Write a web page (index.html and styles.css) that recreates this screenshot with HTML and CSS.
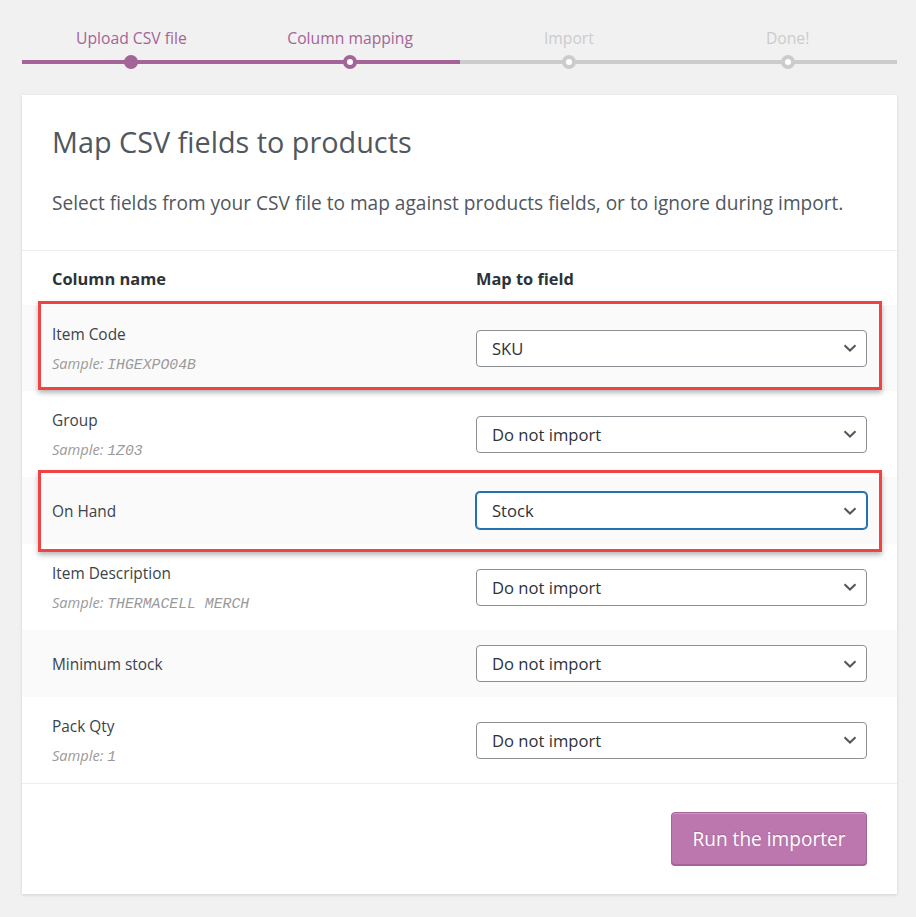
FILE: index.html
```html
<!DOCTYPE html>
<html>
<head>
<meta charset="utf-8">
<link rel="stylesheet" href="styles.css">
</head>
<body>
<div class="page">
  <ol class="steps">
    <li class="step done"><span class="step-label">Upload CSV file</span><span class="dot"></span></li>
    <li class="step active"><span class="step-label">Column mapping</span><span class="dot"></span></li>
    <li class="step"><span class="step-label">Import</span><span class="dot"></span></li>
    <li class="step"><span class="step-label">Done!</span><span class="dot"></span></li>
  </ol>

  <div class="card">
    <header class="card-header">
      <h2 class="title">Map CSV fields to products</h2>
      <p class="intro">Select fields from your CSV file to map against products fields, or to ignore during import.</p>
    </header>

    <div class="table">
      <div class="row head">
        <div class="cell name">Column name</div>
        <div class="cell field">Map to field</div>
      </div>

      <div class="row shaded">
        <div class="cell name">
          <div class="label">Item Code</div>
          <div class="sample">Sample: <code>IHGEXPO04B</code></div>
        </div>
        <div class="cell field"><div class="select"><span>SKU</span><svg class="chev" viewBox="0 0 14 8"><path d="M1.5 1.2l5.5 5.3 5.5-5.3" /></svg></div></div>
        <div class="highlight one"></div>
      </div>

      <div class="row">
        <div class="cell name">
          <div class="label">Group</div>
          <div class="sample">Sample: <code>1Z03</code></div>
        </div>
        <div class="cell field"><div class="select"><span>Do not import</span><svg class="chev" viewBox="0 0 14 8"><path d="M1.5 1.2l5.5 5.3 5.5-5.3" /></svg></div></div>
      </div>

      <div class="row shaded">
        <div class="cell name">
          <div class="label">On Hand</div>
        </div>
        <div class="cell field"><div class="select focus"><span>Stock</span><svg class="chev" viewBox="0 0 14 8"><path d="M1.5 1.2l5.5 5.3 5.5-5.3" /></svg></div></div>
        <div class="highlight two"></div>
      </div>

      <div class="row">
        <div class="cell name">
          <div class="label">Item Description</div>
          <div class="sample">Sample: <code>THERMACELL MERCH</code></div>
        </div>
        <div class="cell field"><div class="select"><span>Do not import</span><svg class="chev" viewBox="0 0 14 8"><path d="M1.5 1.2l5.5 5.3 5.5-5.3" /></svg></div></div>
      </div>

      <div class="row shaded">
        <div class="cell name">
          <div class="label">Minimum stock</div>
        </div>
        <div class="cell field"><div class="select"><span>Do not import</span><svg class="chev" viewBox="0 0 14 8"><path d="M1.5 1.2l5.5 5.3 5.5-5.3" /></svg></div></div>
      </div>

      <div class="row last">
        <div class="cell name">
          <div class="label">Pack Qty</div>
          <div class="sample">Sample: <code>1</code></div>
        </div>
        <div class="cell field"><div class="select"><span>Do not import</span><svg class="chev" viewBox="0 0 14 8"><path d="M1.5 1.2l5.5 5.3 5.5-5.3" /></svg></div></div>
      </div>
    </div>

    <div class="actions">
      <button class="run">Run the importer</button>
    </div>
  </div>
</div>
</body>
</html>
```
FILE: styles.css
```css
* { box-sizing: border-box; }
html, body { margin: 0; padding: 0; }
body {
  background: #f1f1f1;
  font-family: "Open Sans", "Noto Sans", sans-serif;
  color: #50575e;
  width: 916px;
  height: 917px;
  overflow: hidden;
}
.page {
  padding: 0 19px 0 22px;
}
.steps {
  list-style: none;
  margin: 0;
  padding: 26px 0 0;
  display: grid;
  grid-template-columns: repeat(4, 1fr);
  height: 95px;
}
.step {
  position: relative;
  display: flex;
  flex-direction: column;
  align-items: center;
  border-bottom: 4px solid #ccc;
  height: 38px;
  color: #ccc;
  font-size: 15.7px;
  line-height: 24px;
}
.step.done, .step.active {
  border-bottom-color: #a46497;
  color: #a46497;
}
.step-label { display: block; white-space: nowrap; }
.dot {
  position: absolute;
  left: 50%;
  bottom: -9px;
  width: 14px;
  height: 14px;
  margin-left: -7px;
  border-radius: 50%;
  background: #fff;
  border: 4px solid #ccc;
}
.done .dot { background: #a46497; border-color: #a46497; }
.active .dot { border-color: #a46497; }

.card {
  background: #fff;
  box-shadow: 0 1px 3px rgba(0,0,0,0.13);
  width: 875px;
}
.card-header {
  padding: 25px 30px 0;
  border-bottom: 1px solid #eee;
  height: 156px;
}
.title {
  margin: 0;
  font-size: 28.8px;
  font-weight: 400;
  line-height: 44px;
  color: #50575e;
  white-space: nowrap;
}
.intro {
  margin: 24px 0 0;
  font-size: 19.1px;
  line-height: 30px;
  color: #50575e;
  white-space: nowrap;
}
.table { display: flex; flex-direction: column; }
.row {
  position: relative;
  display: grid;
  grid-template-columns: 424px 391px;
  padding: 15px 30px;
  align-items: center;
}
.row.head { padding: 16px 30px 14px; }
.row.head .cell {
  font-weight: 700;
  font-size: 16.4px;
  line-height: 24px;
  color: #2c3338;
}
.row.shaded { background: #fafafa; }
.row.last { border-bottom: 1px solid #eee; }
.label {
  font-size: 15.4px;
  line-height: 28px;
  height: 28px;
  padding-top: 1px;
  color: #3c434a;
  white-space: nowrap;
}
.sample {
  font-size: 14.6px;
  line-height: 26px;
  height: 28px;
  padding-top: 2px;
  font-style: italic;
  color: #9a9a9a;
  white-space: nowrap;
}
.sample code {
  font-family: "Liberation Mono", "DejaVu Sans Mono", monospace;
  font-size: 14.8px;
  font-style: italic;
  line-height: 1;
}
.select {
  height: 37px;
  border: 1px solid #8c8f94;
  border-radius: 4px;
  background: #fff;
  display: flex;
  align-items: center;
  justify-content: space-between;
  padding: 0 9px 0 15px;
  font-size: 16.6px;
  color: #2c3338;
}
.select.focus {
  border-color: #2271b1;
  box-shadow: 0 0 0 1px #2271b1;
}
.chev {
  width: 14px;
  height: 8px;
  fill: none;
  stroke: #50575e;
  stroke-width: 2;
}
.highlight {
  position: absolute;
  left: 16px;
  right: 15px;
  border: 3px solid #f04444;
  box-shadow: 0 3px 5px rgba(0,0,0,0.28);
  pointer-events: none;
}
.highlight.one { top: -4px; bottom: 1px; }
.highlight.two { top: -7px; bottom: -8px; }
.actions {
  display: flex;
  justify-content: flex-end;
  padding: 28px 30px 29px;
}
.run {
  width: 196px;
  height: 53px;
  background: #bb77ae;
  border: 1px solid #a36597;
  border-radius: 4px;
  box-shadow: inset 0 1px 0 rgba(255,255,255,0.25), 0 1px 0 #a36597;
  color: #fff;
  font-family: "Open Sans", "Noto Sans", sans-serif;
  font-size: 19.1px;
  text-shadow: 0 -1px 1px #a36597;
  padding: 0;
}
```
